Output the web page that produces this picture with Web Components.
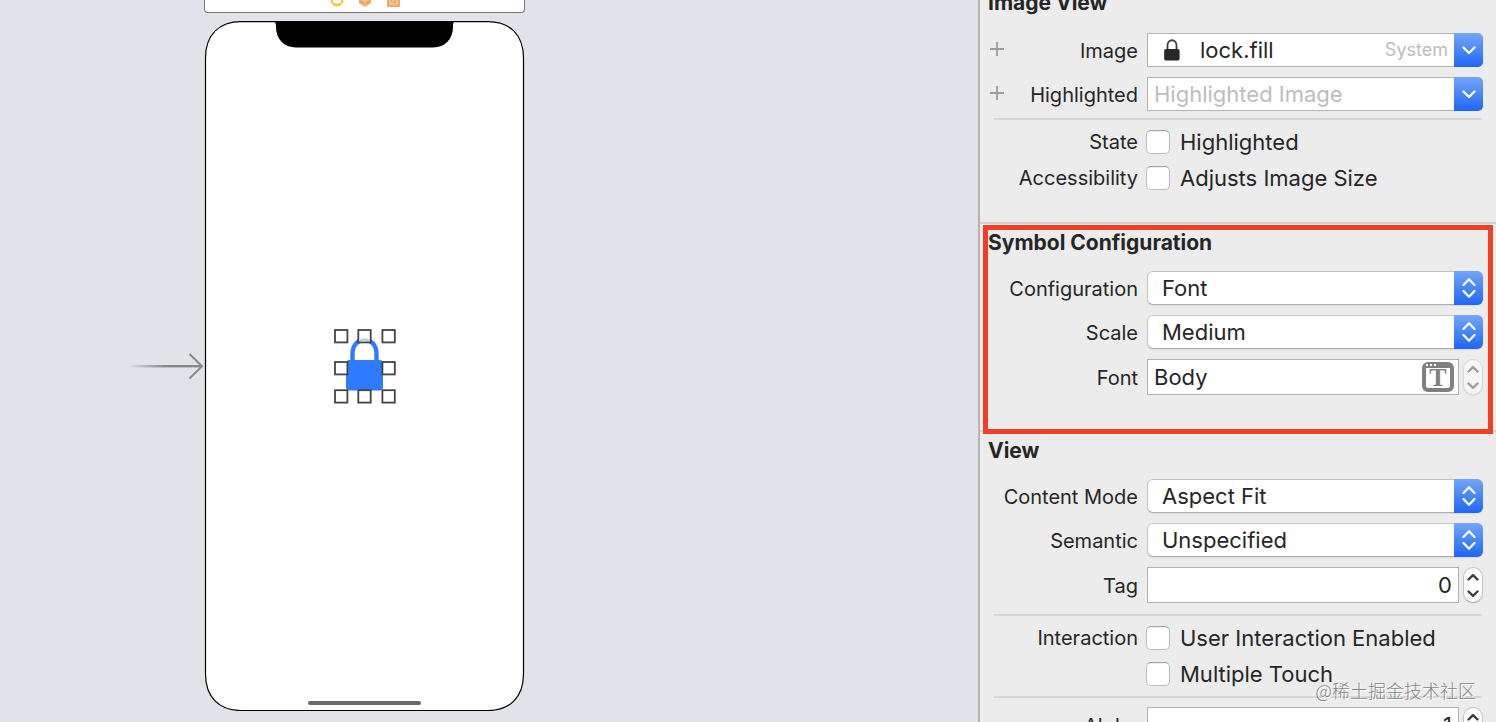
<!DOCTYPE html>
<html lang="en">
<head>
<meta charset="utf-8">
<meta name="viewport" content="width=device-width, initial-scale=1">
<title>Attributes inspector</title>
<style>
  html, body { margin: 0; height: 100%; overflow: hidden; }
  body { font-family: Inter, Roboto, sans-serif; color: #262626; background: #e2e3e8; }
</style>
</head>
<body>
<ide-window>
  <design-canvas slot="canvas">
    <scene-dock slot="dock"></scene-dock>
    <entry-arrow slot="arrow"></entry-arrow>
    <device-frame slot="device"><selected-symbol></selected-symbol></device-frame>
  </design-canvas>
  <inspector-panel slot="inspector">
    <inspector-section class="scrolled" heading="Image View">
      <combo-row label="Image" value="lock.fill" hint="System" icon></combo-row>
      <combo-row label="Highlighted" placeholder="Highlighted Image"></combo-row>
      <row-divider></row-divider>
      <check-row label="State" text="Highlighted"></check-row>
      <check-row label="Accessibility" text="Adjusts Image Size"></check-row>
    </inspector-section>
    <inspector-section class="symbol" heading="Symbol Configuration" marked>
      <popup-row label="Configuration" value="Font"></popup-row>
      <popup-row label="Scale" value="Medium"></popup-row>
      <text-row label="Font" value="Body" picker disabled></text-row>
    </inspector-section>
    <inspector-section heading="View">
      <popup-row label="Content Mode" value="Aspect Fit"></popup-row>
      <popup-row label="Semantic" value="Unspecified"></popup-row>
      <text-row label="Tag" value="0" numeric></text-row>
      <row-divider></row-divider>
      <check-row label="Interaction" text="User Interaction Enabled"></check-row>
      <check-row text="Multiple Touch"></check-row>
      <row-divider class="tight"></row-divider>
      <text-row label="Alpha" value="1" numeric></text-row>
    </inspector-section>
  </inspector-panel>
  <water-mark slot="mark">@稀土掘金技术社区</water-mark>
</ide-window>

<script>
const define = (name, html) => customElements.define(name, class extends HTMLElement {
  constructor() {
    super();
    this.attachShadow({ mode: 'open' }).innerHTML = html;
  }
});

define('ide-window', `
  <style>
    :host { display: grid; grid-template-columns: minmax(0, 1fr) 518px; grid-template-rows: minmax(0, 1fr); height: 100vh; position: relative; overflow: hidden; }
  </style>
  <slot name="canvas"></slot><slot name="inspector"></slot><slot name="mark"></slot>`);

define('water-mark', `
  <style>
    :host { position: absolute; right: 20px; bottom: 19px; font: 18px/26px "Noto Sans CJK SC", sans-serif; font-weight: 300; color: #858585; text-shadow: 1px 1px 0 #fff; white-space: nowrap; pointer-events: none; }
  </style><slot></slot>`);

define('design-canvas', `
  <style>
    :host { display: grid; grid-template-columns: 76px 321px; grid-template-rows: 13px auto; row-gap: 8px; align-content: start; padding-left: 128px; background: #e2e3e8; overflow: hidden; }
    .dock { grid-column: 2; }
    .arrow { grid-column: 1; grid-row: 2; align-self: center; display: grid; }
    .device { grid-column: 2; grid-row: 2; }
  </style>
  <div class="dock"><slot name="dock"></slot></div>
  <div class="arrow"><slot name="arrow"></slot></div>
  <div class="device"><slot name="device"></slot></div>`);

define('scene-dock', `
  <style>
    :host { display: flex; justify-content: center; height: 12px; background: #fff; border: 1px solid #777; border-top: 0; border-radius: 0 0 4px 4px; overflow: hidden; }
    svg { display: block; }
  </style>
  <svg width="76" height="12" viewBox="0 0 76 12" aria-hidden="true">
    <circle cx="10" cy="0" r="5" fill="#fff" stroke="#f8c63d" stroke-width="3"/>
    <path d="M6 0h8v3H6z" fill="#fff"/>
    <path d="M32 -5l6-3 6 3v8l-6 4-6-4z" fill="#eda862"/>
    <path d="M32 -1l6 2 6-2M38 1v6" stroke="#f7cfa0" fill="none"/>
    <rect x="60" y="-6" width="13" height="13" rx="1" fill="#eda862"/>
    <rect x="63" y="-3" width="7" height="7" fill="none" stroke="#f9dab5"/>
    <path d="M64 3l5-5" stroke="#f9dab5"/>
  </svg>`);

define('entry-arrow', `
  <style>:host { display: block; } svg { display: block; }</style>
  <svg width="76" height="30" viewBox="0 0 76 30" aria-hidden="true">
    <defs><linearGradient id="g" gradientUnits="userSpaceOnUse" x1="0" x2="74" y1="0" y2="0">
      <stop offset="0" stop-color="#888" stop-opacity="0"/><stop offset=".5" stop-color="#888"/></linearGradient></defs>
    <rect y="14" width="74" height="2.4" fill="url(#g)"/>
    <path d="M61.5 3L74 15.2 61.5 27.5" fill="none" stroke="#888" stroke-width="2"/>
  </svg>`);

define('device-frame', `
  <style>
    :host { display: grid; place-items: center; width: 321px; height: 690px; }
    svg, .content { grid-area: 1 / 1; display: block; }
  </style>
  <svg width="321" height="690" viewBox="0 0 321 690" aria-hidden="true">
    <path d="M37 .6H284C306 .6 319.5 14 319.5 37V653C319.5 676 306 689.5 284 689.5H37C15 689.5 1.5 676 1.5 653V37C1.5 14 15 .6 37 .6Z" fill="#fff" stroke="#000" stroke-width="1.2"/>
    <path d="M69 .5C71.5 .5 72 2 72 6C72 18 80 26.5 92 26.5H229C241 26.5 249 18 249 6C249 2 249.5 .5 252 .5Z" fill="#000"/>
    <rect x="104" y="680" width="113" height="4" rx="2" fill="#6b6b6b"/>
  </svg>
  <div class="content"><slot></slot></div>`);

define('selected-symbol', `
  <style>:host { display: block; } svg { display: block; }</style>
  <svg width="64" height="76" viewBox="0 0 64 76" aria-label="lock.fill" role="img">
    <path d="M19.5 36V26C19.5 7 43.5 7 43.5 26V36" fill="none" stroke="#2f7bff" stroke-width="4.4"/>
    <rect x="13" y="32" width="37" height="30.5" rx="3.5" fill="#2f7bff"/>
    <g fill="#fff" stroke="#444" stroke-width="1.8">
      <rect x="2" y="2" width="12.4" height="12.4"/><rect x="49.4" y="2" width="12.4" height="12.4"/>
      <rect x="2" y="62.2" width="12.4" height="12.4"/><rect x="49.4" y="62.2" width="12.4" height="12.4"/>
      <rect x="2" y="34" width="12.4" height="12.4"/><rect x="49.4" y="34" width="12.4" height="12.4"/>
      <rect x="25.3" y="62.2" width="12.4" height="12.4"/>
      <rect x="25.3" y="2" width="12.4" height="12.4"/>
    </g>
    <path d="M26.5 12.6Q31.5 10.6 36.5 12.6" fill="none" stroke="#a9caff" stroke-width="2"/>
  </svg>`);

define('inspector-panel', `
  <style>:host { display: block; background: #ececec; border-left: 2px solid #b4b4b5; overflow: hidden; }</style><slot></slot>`);

define('row-divider', `
  <style>
    :host { display: block; height: 2px; margin: var(--divider-space, 11px) 1px 10px 14px; background: #d5d5d5; }
    :host(.tight) { margin-top: 10px; margin-bottom: 9px; }
  </style>`);

customElements.define('inspector-section', class extends HTMLElement {
  constructor() {
    super();
    this.attachShadow({ mode: 'open' }).innerHTML = `
      <style>
        :host { display: block; position: relative; border-top: 2px solid #d0d0d0; padding: 7px 13px 32px 0; }
        :host(.scrolled) { margin-top: -18px; --divider-space: 7px; }
        :host(.scrolled) h2 { margin-bottom: 18px; }
        :host(.symbol) { padding-bottom: 35px; }
        h2 { margin: 0 0 16px 8px; font-size: 21px; line-height: 24px; font-weight: 700; }
        .mark { display: none; }
        :host([marked]) .mark { display: block; position: absolute; z-index: 1; inset: 1px 3px -4px; border: 5px solid #ee4026; pointer-events: none; }
      </style>
      <h2></h2><slot></slot><div class="mark"></div>`;
  }
  connectedCallback() { this.shadowRoot.querySelector('h2').textContent = this.getAttribute('heading'); }
});

const chevron = up => `<svg width="12" height="8" viewBox="0 0 12 8" fill="none" stroke="currentColor" stroke-width="2.4" stroke-linecap="round" stroke-linejoin="round" aria-hidden="true"><path d="${up ? 'M1.5 6.5L6 2.2l4.5 4.3' : 'M1.5 1.5L6 5.8l4.5-4.3'}"/></svg>`;
const wideChevron = up => `<svg width="14" height="8" viewBox="0 0 14 8" fill="none" stroke="currentColor" stroke-width="2.2" stroke-linecap="round" stroke-linejoin="round" aria-hidden="true"><path d="${up ? 'M1.5 7L7 1.2 12.5 7' : 'M1.5 1L7 6.8 12.5 1'}"/></svg>`;

/* Shared skeleton: a right-aligned label column and a control column. */
class FieldRow extends HTMLElement {
  constructor() { super(); this.attachShadow({ mode: 'open' }); }
  get name() { return this.getAttribute('label') || ''; }
  get value() { return this.getAttribute('value') || ''; }
  connectedCallback() {
    this.shadowRoot.innerHTML = `
      <style>
        :host { display: grid; grid-template-columns: 158px minmax(0, 1fr); column-gap: 9px; align-items: center; margin-top: 10px; font-size: 20px; line-height: 24px; }
        :host(:first-child) { margin-top: 0; }
        .name { text-align: right; padding-top: 2px; white-space: nowrap; }
        input, select, button { font: inherit; color: inherit; margin: 0; box-sizing: border-box; }
        button { display: grid; place-items: center; padding: 0; border: 0; background: none; }
        input:not([type=checkbox]) { flex: 1; align-self: stretch; min-width: 0; width: 0; border: 0; background: none; padding: 0; outline: 0; font-size: 22px; line-height: 32px; }
        .cap { color: #fff; background: linear-gradient(#75a5f7, #4a87f6 50%, #1f65f8); }
        svg { display: block; }
        ${this.styles}
      </style>${this.markup}`;
  }
}

customElements.define('combo-row', class extends FieldRow {
  get styles() { return `
    .lead { display: grid; grid-template-columns: auto 1fr; align-items: center; padding-left: 10px; }
    .add { color: #9b9b9b; }
    .box { display: flex; align-items: center; height: 34px; }
    .field { box-sizing: border-box; flex: 1; min-width: 0; height: 34px; display: flex; align-items: center; border: 1px solid #b3b3b3; border-right: 0; background: #fff; padding: 0 6px; }
    .lock { margin: 0 19px 0 9px; }
    .hint { font-size: 18px; color: #bdbdbd; }
    ::placeholder { color: #bdbdbd; opacity: 1; }
    .cap { width: 29px; height: 34px; border-radius: 0 5px 5px 0; }`; }
  get markup() { return `
    <div class="lead">
      <button class="add" aria-label="Add variation"><svg width="14" height="16" viewBox="0 0 14 16" stroke="currentColor" stroke-width="1.8" aria-hidden="true"><path d="M7 0v14M0 7h14"/></svg></button>
      <label class="name" for="c">${this.name}</label>
    </div>
    <div class="box"><div class="field">
      ${this.hasAttribute('icon') ? `<svg class="lock" width="18" height="24" viewBox="0 0 18 24" aria-hidden="true"><path d="M4.5 12V7.5C4.5 .5 13.5 .5 13.5 7.5V12" fill="none" stroke="#3c3c3c" stroke-width="1.8"/><rect x="1.2" y="11" width="15.4" height="11.5" rx="1.8" fill="#262626"/></svg>` : ''}
      <input id="c" type="text" value="${this.value}" placeholder="${this.getAttribute('placeholder') || ''}">
      ${this.hasAttribute('hint') ? `<span class="hint">${this.getAttribute('hint')}</span>` : ''}
    </div><button class="cap" aria-label="Show choices"><svg width="14" height="9" viewBox="0 0 14 9" fill="none" stroke="currentColor" stroke-width="2.4" stroke-linecap="round" stroke-linejoin="round" aria-hidden="true"><path d="M1.5 1.5L7 7l5.5-5.5"/></svg></button></div>`; }
});

customElements.define('popup-row', class extends FieldRow {
  get styles() { return `
    .box { position: relative; display: flex; height: 34px; }
    select { flex: 1; min-width: 0; height: 34px; appearance: none; border: 1px solid #c4c4c4; border-bottom-color: #adadad; border-radius: 6px; background: #fff; padding: 0 34px 0 14px; font-size: 22px; box-shadow: 0 1px 1px #0001; }
    .cap { position: absolute; right: 0; top: 0; width: 29px; height: 34px; border-radius: 0 6px 6px 0; display: grid; align-content: center; justify-items: center; row-gap: 4px; pointer-events: none; }`; }
  get markup() { return `
    <label class="name" for="c">${this.name}</label>
    <div class="box"><select id="c"><option>${this.value}</option></select>
    <span class="cap">${wideChevron(true)}${wideChevron(false)}</span></div>`; }
});

customElements.define('text-row', class extends FieldRow {
  get styles() { return `
    .box { display: flex; gap: 4px; height: 36px; }
    .field { flex: 1; min-width: 0; display: flex; align-items: center; border: 1px solid #b3b3b3; background: #fff; padding: 0 4px 0 6px; }
    :host([numeric]) .field { padding: 0 6px; }
    :host([numeric]) input:not([type=checkbox]) { text-align: right; }
    .stepper { width: 20px; box-sizing: border-box; display: grid; grid-template-rows: 1fr 1fr; border: 1px solid #c4c4c4; border-bottom-color: #adadad; border-radius: 10px; background: #fff; color: #3c3c3c; box-shadow: 0 1px 1px #0001; }
    :host([disabled]) .stepper { background: #f5f5f5; border-color: #d6d6d6; color: #9c9c9c; }
    .picker { width: 32px; height: 30px; border: 4px solid #808080; border-top-width: 6px; border-radius: 6px; background: #fff; color: #808080; position: relative; font: bold 26px/20px "Liberation Serif", serif; }
    .picker::before { content: ""; position: absolute; left: 0; top: -4px; width: 2px; height: 2px; background: #fff; box-shadow: 4px 0 #fff, 8px 0 #fff; }`; }
  get markup() { return `
    <label class="name" for="c">${this.name}</label>
    <div class="box"><div class="field"><input id="c" type="text" value="${this.value}">
      ${this.hasAttribute('picker') ? `<button class="picker" aria-label="Choose font">T</button>` : ''}</div>
      <div class="stepper"><button aria-label="Increase">${chevron(true)}</button><button aria-label="Decrease">${chevron(false)}</button></div>
    </div>`; }
});

customElements.define('check-row', class extends FieldRow {
  get styles() { return `
    :host { margin-top: 12px; column-gap: 8px; }
    .name { padding: 0; }
    .box { display: flex; align-items: center; height: 24px; font-size: 22px; white-space: nowrap; }
    .box label { padding-left: 10px; }
    input { appearance: none; flex: none; width: 24px; height: 24px; border: 1px solid #bdbdbd; border-top-color: #a3a3a3; border-radius: 5px; background: #fff; box-shadow: inset 0 1px 1px #0001; }`; }
  get markup() { return `
    <span class="name">${this.name}</span>
    <div class="box"><input id="c" type="checkbox"><label for="c">${this.getAttribute('text')}</label></div>`; }
});

/* A row that follows a divider takes its spacing from the divider. */
document.querySelectorAll('row-divider + *').forEach(row => { row.style.marginTop = '0'; });
</script>
</body>
</html>
